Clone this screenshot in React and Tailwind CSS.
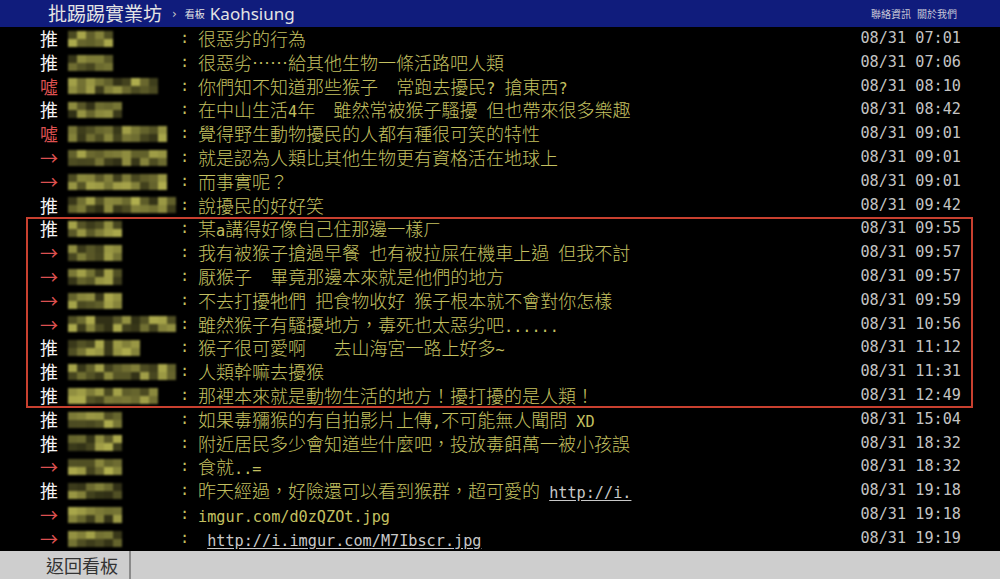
import React from 'react';

const rows = [
  ['推', 5, ['很惡劣的行為'], '08/31 07:01'],
  ['推', 5, ['很惡劣……給其他生物一條活路吧人類'], '08/31 07:06'],
  ['噓', 10, ['你們知不知道那些猴子  常跑去擾民? 搶東西?'], '08/31 08:10'],
  ['推', 6, ['在中山生活4年  雖然常被猴子騷擾 但也帶來很多樂趣'], '08/31 08:42'],
  ['噓', 11, ['覺得野生動物擾民的人都有種很可笑的特性'], '08/31 09:01'],
  ['→', 11, ['就是認為人類比其他生物更有資格活在地球上'], '08/31 09:01'],
  ['→', 11, ['而事實呢？'], '08/31 09:01'],
  ['推', 12, ['說擾民的好好笑'], '08/31 09:42'],
  ['推', 6, ['某a講得好像自己住那邊一樣ㄏ'], '08/31 09:55'],
  ['→', 6, ['我有被猴子搶過早餐 也有被拉屎在機車上過 但我不討'], '08/31 09:57'],
  ['→', 6, ['厭猴子  畢竟那邊本來就是他們的地方'], '08/31 09:57'],
  ['→', 6, ['不去打擾牠們 把食物收好 猴子根本就不會對你怎樣'], '08/31 09:59'],
  ['→', 12, ['雖然猴子有騷擾地方，毒死也太惡劣吧......'], '08/31 10:56'],
  ['推', 8, ['猴子很可愛啊   去山海宮一路上好多~'], '08/31 11:12'],
  ['推', 12, ['人類幹嘛去擾猴'], '08/31 11:31'],
  ['推', 10, ['那裡本來就是動物生活的地方！擾打擾的是人類！'], '08/31 12:49'],
  ['推', 6, ['如果毒獼猴的有自拍影片上傳,不可能無人聞問 XD'], '08/31 15:04'],
  ['推', 6, ['附近居民多少會知道些什麼吧，投放毒餌萬一被小孩誤'], '08/31 18:32'],
  ['→', 6, ['食就..='], '08/31 18:32'],
  ['推', 6, ['昨天經過，好險還可以看到猴群，超可愛的 ', { link: 'http://i.' }], '08/31 19:18'],
  ['→', 6, ['imgur.com/d0zQZOt.jpg'], '08/31 19:18'],
  ['→', 6, [' ', { link: 'http://i.imgur.com/M7Ibscr.jpg' }], '08/31 19:19'],
];

// mosaic in place of the user id
const Mosaic = ({ seed, cols }) => {
  let s = seed * 9301 + 49297;
  const rnd = () => {
    s = (s * 9301 + 49297) % 233280;
    return s / 233280;
  };
  const cells = [];
  for (let r = 0; r < 2; r++) {
    for (let c = 0; c < cols; c++) {
      const v = rnd();
      const l = 0.22 + v * 0.6;
      cells.push(
        <span
          key={r + '-' + c}
          className="block w-[9px] h-[8px]"
          style={{ backgroundColor: `rgb(${Math.round(215 * l)},${Math.round(212 * l)},${Math.round(95 * l)})` }}
        />
      );
    }
  }
  return (
    <div className="grid blur-[0.8px]" style={{ gridTemplateColumns: `repeat(${cols}, 9px)` }}>
      {cells}
    </div>
  );
};

const Text = ({ text }) =>
  text.split(/([\x20-\x7e]+)/).map((seg, i) =>
    /^[\x20-\x7e]+$/.test(seg) ? (
      <span key={i} className="font-['DejaVu_Sans_Mono',monospace] text-[15.2px] leading-none">{seg}</span>
    ) : seg ? (
      <span key={i}>{seg}</span>
    ) : null
  );

const Row = ({ row, idx }) => {
  const [tag, idLen, content, time] = row;
  return (
    <div className="flex items-center h-[23.8px] leading-[23.8px]">
      <span
        className={`w-[28px] font-['Noto_Sans_CJK_TC',sans-serif] text-[18px] ${tag === '推' ? 'text-[#f4f4f4]' : 'text-[#dc5050]'}`}
      >
        {tag}
      </span>
      <div className="w-[110px]">
        <Mosaic seed={idx + 3} cols={idLen} />
      </div>
      <span className="w-[20px] pl-[2px] font-['DejaVu_Sans_Mono',monospace] text-[15.2px] text-[#c4c060]">:</span>
      <div className="flex-1 h-[23.8px] whitespace-pre font-['Noto_Sans_CJK_TC',sans-serif] font-light text-[18px] text-[#c4c060]">
        {content.map((c, i) =>
          typeof c === 'string' ? (
            <Text key={i} text={c} />
          ) : (
            <span key={i} className="font-['DejaVu_Sans_Mono',monospace] text-[15.2px] leading-none text-[#c8c8c8] underline underline-offset-2">
              {c.link}
            </span>
          )
        )}
      </div>
      <span className="w-[101px] text-right font-['DejaVu_Sans_Mono',monospace] text-[15.2px] text-[#c4c4c4]">{time}</span>
    </div>
  );
};

export default function App() {
  return (
    <div className="w-[1000px] h-[579px] bg-black flex flex-col overflow-hidden">
      {/* top bar */}
      <div className="h-[27px] bg-[#101c7c] flex items-center pl-[48px] pr-[43px] text-[#e4e4e4]">
        <span className="font-['Noto_Sans_CJK_TC',sans-serif] text-[19px]">批踢踢實業坊</span>
        <span className="ml-[10px] text-[12px] text-[#c8c8c8] font-['DejaVu_Sans',sans-serif]">›</span>
        <span className="ml-[8px] text-[10px] font-['Noto_Sans_CJK_TC',sans-serif]">看板</span>
        <span className="ml-[5px] text-[17px] font-['Noto_Sans',sans-serif]">Kaohsiung</span>
        <div className="ml-auto flex gap-[6px] text-[10px] text-[#c8c8d8] font-['Noto_Sans_CJK_TC',sans-serif]">
          <span>聯絡資訊</span>
          <span>關於我們</span>
        </div>
      </div>

      {/* comments */}
      <div className="flex-1 pl-[40px] pr-[39px]">
        {rows.slice(0, 8).map((r, i) => (
          <Row key={i} row={r} idx={i} />
        ))}
        <div className="-ml-[14px] pl-[14px] -mr-[12px] pr-[12px] ring-2 ring-inset ring-[#c8402f]">
          {rows.slice(8, 16).map((r, i) => (
            <Row key={i} row={r} idx={i + 8} />
          ))}
        </div>
        {rows.slice(16).map((r, i) => (
          <Row key={i} row={r} idx={i + 16} />
        ))}
      </div>

      {/* bottom bar */}
      <div className="h-[28px] bg-[#cecece] flex">
        <div className="w-[129px] pr-[11px] text-right font-['Noto_Sans_CJK_TC',sans-serif] text-[18px] leading-[28px] text-[#333]">
          返回看板
        </div>
        <div className="w-[2px] bg-[#8a8a8a]" />
      </div>
    </div>
  );
}
